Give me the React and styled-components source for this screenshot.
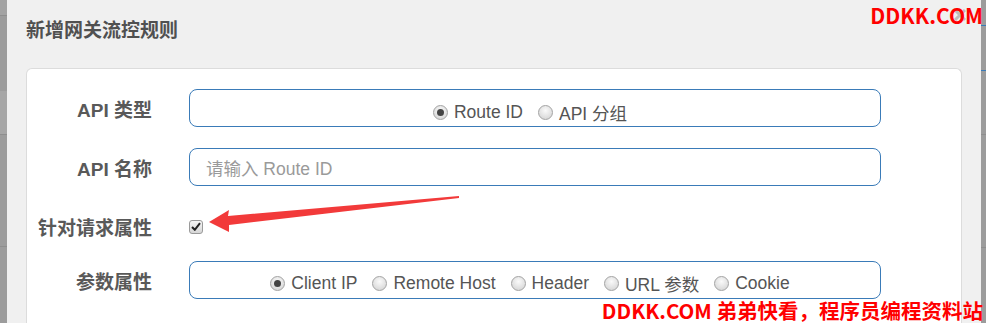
import * as React from "react";
import styled, { createGlobalStyle } from "styled-components";

const GlobalStyle = createGlobalStyle`
  html, body {
    margin: 0;
    padding: 0;
    background: #9b9b9b;
    font-family: "Liberation Sans", "Noto Sans CJK SC", sans-serif;
  }
`;

const Page = styled.div`
  position: relative;
  display: flex;
  width: 986px;
  height: 323px;
  overflow: hidden;
  background: #9b9b9b;
`;

const SideStrip = styled.div`
  width: ${(p) => p.width}px;
  flex: none;
  display: flex;
  flex-direction: column;
  background: #9c9c9c;
`;

const StripBand = styled.div`
  height: ${(p) => p.height}px;
  flex: none;
  background: ${(p) => p.bg || "transparent"};
  border-bottom: 1px solid ${(p) => p.line || "transparent"};
`;

const Modal = styled.div`
  flex: 1;
  display: flex;
  flex-direction: column;
  background: #f0f0f0;
  padding: 0 19px 0 19px;
`;

const Header = styled.div`
  height: 56px;
  display: flex;
  align-items: center;
  font-size: 19px;
  font-weight: bold;
  color: #505050;
  font-family: "Noto Sans CJK SC", sans-serif;
`;

const CloseIcon = styled.svg`
  position: absolute;
  top: 8px;
  right: 19px;
`;

const Card = styled.div`
  margin-top: 12px;
  flex: 1;
  background: #fff;
  border: 1px solid #dcdcdc;
  border-bottom: none;
  border-radius: 6px 6px 0 0;
  padding: 20px 80px 0 0;
`;

const Row = styled.div`
  display: grid;
  grid-template-columns: 125px 1fr;
  column-gap: 37px;
  align-items: center;
  height: 38px;
  margin-bottom: ${(p) => p.gap}px;
`;

const Label = styled.label`
  text-align: right;
  font-size: 19px;
  font-weight: bold;
  color: #595959;
  font-family: "Liberation Sans", "Noto Sans CJK SC", sans-serif;
  white-space: nowrap;
`;

const Field = styled.div`
  box-sizing: border-box;
  height: 38px;
  border: 1px solid #3a7bb8;
  border-radius: 8px;
  display: flex;
  align-items: center;
  justify-content: ${(p) => (p.center ? "center" : "flex-start")};
  padding: ${(p) => (p.center ? `${p.drop}px 10px 0 0` : "0 16px")};
  font-size: 17.5px;
  color: #555;
`;

const Placeholder = styled.span`
  color: #9a9a9a;
`;

const RadioItem = styled.span`
  display: inline-flex;
  align-items: center;
  gap: 6px;
  margin-right: 15px;
  &:last-child {
    margin-right: 0;
  }
`;

const RadioDot = styled.span`
  box-sizing: border-box;
  width: 15px;
  height: 15px;
  border-radius: 50%;
  border: 1px solid #a3a3a3;
  background: radial-gradient(circle at 50% 35%, #fafafa 0%, #d8d8d8 80%);
  display: inline-flex;
  align-items: center;
  justify-content: center;
  &::after {
    content: "";
    width: 7px;
    height: 7px;
    border-radius: 50%;
    background: ${(p) => (p.checked ? "#444" : "transparent")};
  }
`;

const Check = styled.span`
  box-sizing: border-box;
  width: 14px;
  height: 14px;
  border-radius: 3px;
  border: 1px solid #9a9a9a;
  background: linear-gradient(#f6f6f6, #d6d6d6);
  display: inline-flex;
  align-items: center;
  justify-content: center;
  svg {
    display: block;
  }
`;

const Overlay = styled.svg`
  position: absolute;
  left: 0;
  top: 0;
  pointer-events: none;
`;

const Watermark = styled.div`
  position: absolute;
  right: ${(p) => p.right}px;
  ${(p) => (p.top !== undefined ? `top: ${p.top}px;` : `bottom: ${p.bottom}px;`)}
  color: #ff0000;
  font-size: ${(p) => p.size}px;
  font-weight: bold;
  font-family: "Noto Sans CJK SC", "Liberation Sans", sans-serif;
  line-height: 1.15;
  white-space: nowrap;
`;

const Radio = ({ checked, children }) => (
  <RadioItem>
    <RadioDot checked={checked} />
    {children}
  </RadioItem>
);

const params = ["Client IP", "Remote Host", "Header", "URL 参数", "Cookie"];

export default function App() {
  return (
    <>
      <GlobalStyle />
      <Page>
        <SideStrip width={7}>
          <StripBand height={15} line="#8e8e8e" bg="#a3a3a3" />
          <StripBand height={74} bg="#9c9c9c" />
          <StripBand height={43} line="#8e8e8e" bg="#a6a6a6" />
          <StripBand height={111} line="#8e8e8e" />
        </SideStrip>
        <Modal>
          <Header>新增网关流控规则</Header>
          <Card>
            <Row gap={21}>
              <Label>API 类型</Label>
              <Field center drop={9}>
                <Radio checked>Route ID</Radio>
                <Radio>API 分组</Radio>
              </Field>
            </Row>
            <Row gap={21}>
              <Label>API 名称</Label>
              <Field>
                <Placeholder>请输入 Route ID</Placeholder>
              </Field>
            </Row>
            <Row gap={16}>
              <Label>针对请求属性</Label>
              <div>
                <Check>
                  <svg width="10" height="9" viewBox="0 0 10 9">
                    <path d="M1 5 L3.8 7.8 L9 1.2" fill="none" stroke="#222" strokeWidth="2" />
                  </svg>
                </Check>
              </div>
            </Row>
            <Row gap={0}>
              <Label>参数属性</Label>
              <Field center drop={7}>
                {params.map((p, i) => (
                  <Radio key={p} checked={i === 0}>
                    {p}
                  </Radio>
                ))}
              </Field>
            </Row>
          </Card>
        </Modal>
        <SideStrip width={5}>
          <StripBand height={25} line="#3a7bb8" />
          <StripBand height={44} line="#3a7bb8" />
          <StripBand height={63} line="#8e8e8e" />
          <StripBand height={112} line="#8e8e8e" />
        </SideStrip>
        <CloseIcon width="14" height="14" viewBox="0 0 14 14">
          <path d="M2 2 L12 12 M12 2 L2 12" stroke="#bdbdbd" strokeWidth="3" />
        </CloseIcon>
        <Overlay width="986" height="323" viewBox="0 0 986 323">
          <polygon
            points="209,222 229,210 228,216 459,196 459,198 229,225 229,232"
            fill="#f23a3a"
          />
        </Overlay>
        <Watermark right={3} top={3} size={21}>DDKK.COM</Watermark>
        <Watermark right={3} bottom={0} size={20.5}>
          DDKK.COM 弟弟快看，程序员编程资料站
        </Watermark>
      </Page>
    </>
  );
}
